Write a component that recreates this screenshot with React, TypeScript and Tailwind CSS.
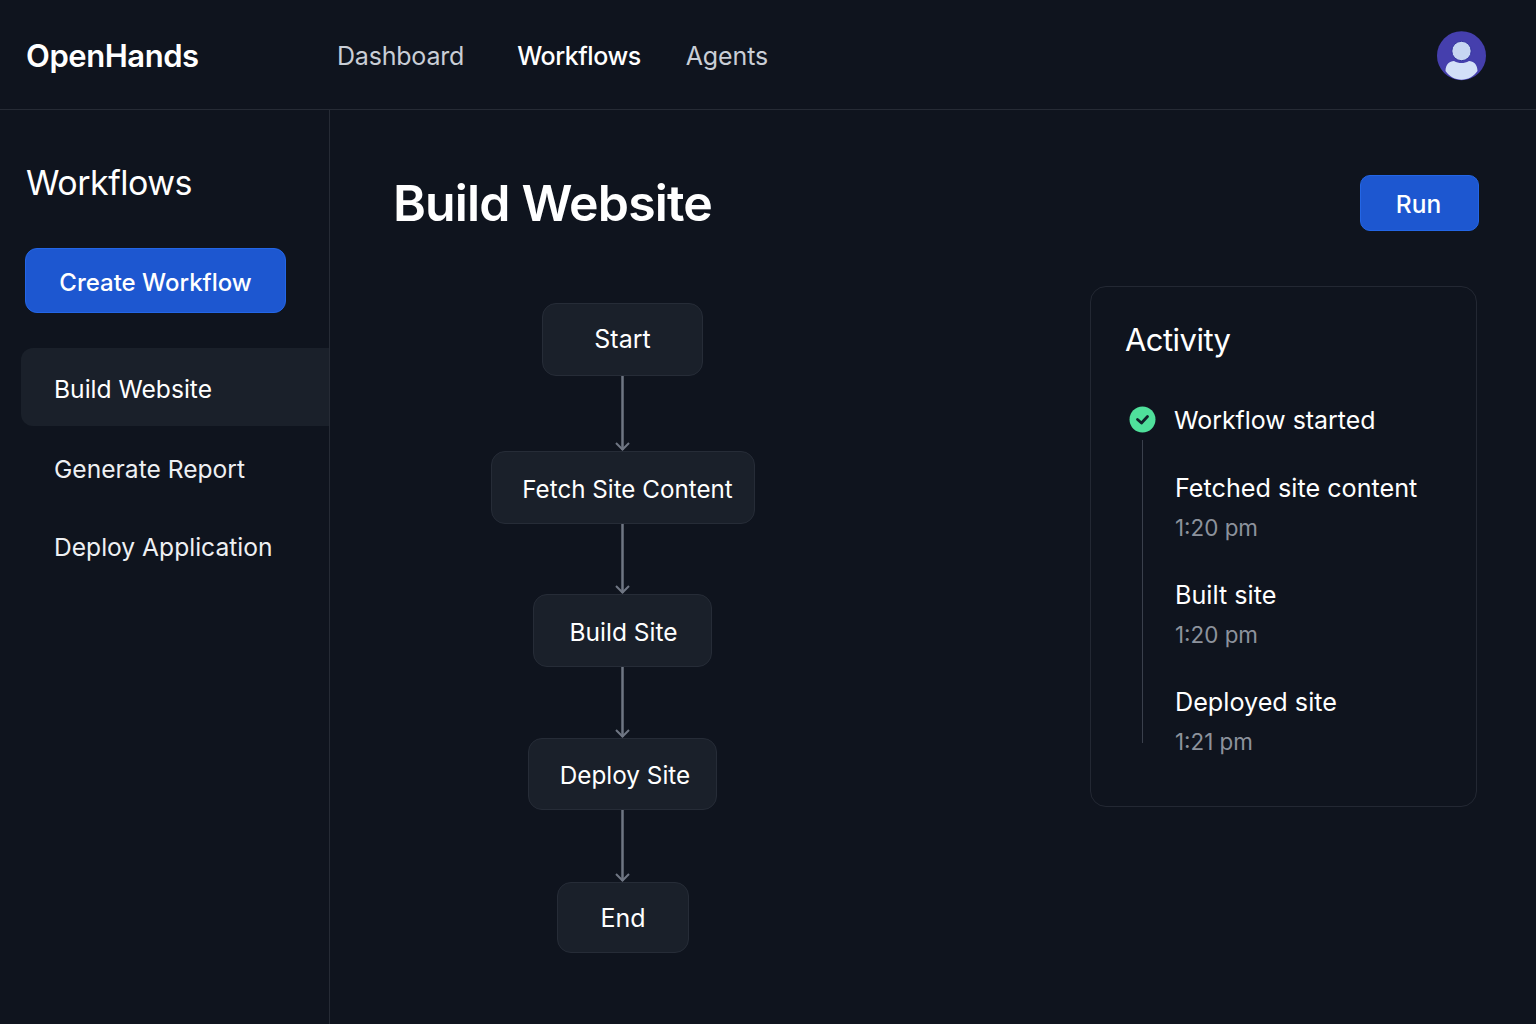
const navItems = [
  { label: 'Dashboard', className: 'text-[#c9ced6] tracking-[-0.2px]', gap: 'mr-[53px]' },
  { label: 'Workflows', className: 'text-white font-medium tracking-[-0.45px]', gap: 'mr-[45px]' },
  { label: 'Agents', className: 'text-[#c9ced6] tracking-[-0.1px]', gap: '' },
];

const steps = [
  { label: 'Start', box: 'w-[161px] h-[73px] text-[25px]', arrow: 75 },
  { label: 'Fetch Site Content', box: 'w-[264px] h-[73px] text-[24.2px] pl-[10px] pt-[5px]', arrow: 70 },
  { label: 'Build Site', box: 'w-[179px] h-[73px] text-[24.5px] pl-[2px] pt-[3px]', arrow: 71 },
  { label: 'Deploy Site', box: 'w-[189px] h-[72px] text-[24.3px] pl-[5px] pt-[2px]', arrow: 72 },
  { label: 'End', box: 'w-[132px] h-[71px] text-[25px] pl-[1px] pt-[2px]', arrow: 0 },
];

const activity = [
  { title: 'Fetched site content', time: '1:20 pm' },
  { title: 'Built site', time: '1:20 pm' },
  { title: 'Deployed site', time: '1:21 pm' },
];

function Avatar() {
  return (
    <svg width="50" height="50" viewBox="0 0 50 50">
      <circle cx="24.5" cy="24.7" r="24.5" fill="#453fad" />
      <circle cx="24.5" cy="20" r="9.7" fill="#c7d6f2" stroke="#3434a0" strokeWidth="1" />
      <path
        d="M8.5 40C8.5 33.5 12.5 30 17 30C19.5 31.5 22 32 24.5 32C27 32 29.5 31.5 32 30C36.5 30 40.5 33.5 40.5 40C36.5 45.5 31 48.7 24.5 48.7C18 48.7 12.5 45.5 8.5 40Z"
        fill="#d3e0f8"
      />
    </svg>
  );
}

function Arrow({ height }: { height: number }) {
  return (
    <svg width="16" height={height} viewBox={`0 0 16 ${height}`} className="block">
      <path d={`M7.5 0V${height - 1}`} stroke="#6f7683" strokeWidth="2.5" fill="none" />
      <path d={`M1 ${height - 8}L7.5 ${height - 1.5}L14 ${height - 8}`} stroke="#6f7683" strokeWidth="2" fill="none" />
    </svg>
  );
}

export default function App() {
  return (
    <div className="w-[1536px] h-[1024px] overflow-hidden bg-[#0f141e] text-white flex flex-col font-['Inter',sans-serif]">
      {/* Top bar */}
      <header className="h-[110px] shrink-0 flex items-center border-b border-[#262b35] pl-[26px] pr-[49px] pt-[3px]">
        <div className="w-[311px] text-[31px] font-semibold tracking-[-0.45px]">OpenHands</div>
        <nav className="flex items-center text-[25px] pt-[2px]">
          {navItems.map((item) => (
            <span key={item.label} className={`${item.className} ${item.gap}`}>
              {item.label}
            </span>
          ))}
        </nav>
        <div className="ml-auto">
          <Avatar />
        </div>
      </header>

      <div className="flex flex-1 min-h-0">
        {/* Sidebar */}
        <aside className="w-[330px] shrink-0 border-r border-[#262b35] pl-[21px] pt-[51px]">
          <h2 className="pl-[5px] text-[34px] leading-[44px] font-normal tracking-[-0.5px]">Workflows</h2>
          <button className="mt-[43px] ml-[4px] w-[261px] h-[65px] pt-[5px] rounded-[12px] bg-[#1d57d0] border border-[#2366e6] text-[24px] font-medium">
            Create Workflow
          </button>
          <div className="mt-[35px] flex flex-col text-[24.6px] text-[#eef0f3]">
            <div className="h-[78px] pl-[33px] pt-[4px] flex items-center rounded-l-[12px] bg-[#1a202a] text-white">
              Build Website
            </div>
            <div className="h-[80px] pl-[33px] pt-[4px] flex items-center mt-[1px]">Generate Report</div>
            <div className="h-[76px] pl-[33px] pt-[4px] flex items-center">Deploy Application</div>
          </div>
        </aside>

        {/* Main */}
        <main className="flex-1 pl-[64px] pr-[57px] pt-[65px]">
          <div className="flex items-center justify-between h-[56px]">
            <h1 className="-ml-px text-[50px] font-semibold tracking-[-0.85px]">Build Website</h1>
            <button className="w-[119px] h-[56px] pt-[3px] pr-[2px] rounded-[10px] bg-[#1d57d0] border border-[#2366e6] text-[24.5px] font-medium">
              Run
            </button>
          </div>

          <div className="flex justify-between mt-[55px]">
            {/* Flow */}
            <div className="w-[457px] pt-[17px] flex flex-col items-center">
              {steps.map((step) => (
                <div key={step.label} className="flex flex-col items-center">
                  <div
                    className={`${step.box} rounded-[14px] bg-[#1a202a] border border-[#262c37] flex items-center justify-center`}
                  >
                    {step.label}
                  </div>
                  {step.arrow > 0 && <Arrow height={step.arrow} />}
                </div>
              ))}
            </div>

            {/* Activity */}
            <section className="w-[387px] h-[521px] mr-[2px] rounded-[16px] border border-[#232833] pl-[35px] pt-[30px]">
              <h3 className="-ml-px text-[31px] leading-[46px] font-normal tracking-[-0.55px]">Activity</h3>
              <div className="relative mt-[38px]">
                <div className="absolute left-[16px] top-[39px] w-px h-[303px] bg-[#3a404c]" />
                <div className="flex items-center h-[36px]">
                  <svg width="27" height="27" viewBox="0 0 27 27" className="ml-[3px]">
                    <circle cx="13.5" cy="13.5" r="13" fill="#4fe09b" />
                    <path d="M8.5 13.5L12.5 17L18.5 10.5" stroke="#10202a" strokeWidth="2.8" fill="none" strokeLinecap="round" strokeLinejoin="round" />
                  </svg>
                  <span className="ml-[18px] pt-[4px] text-[24.9px]">Workflow started</span>
                </div>
                <div className="pl-[49px] pt-[31px] flex flex-col gap-[27px]">
                  {activity.map((item) => (
                    <div key={item.title}>
                      <div className="text-[25.2px] leading-[40px]">{item.title}</div>
                      <div className="text-[22.4px] leading-[40px] text-[#8c929c]">{item.time}</div>
                    </div>
                  ))}
                </div>
              </div>
            </section>
          </div>
        </main>
      </div>
    </div>
  );
}
